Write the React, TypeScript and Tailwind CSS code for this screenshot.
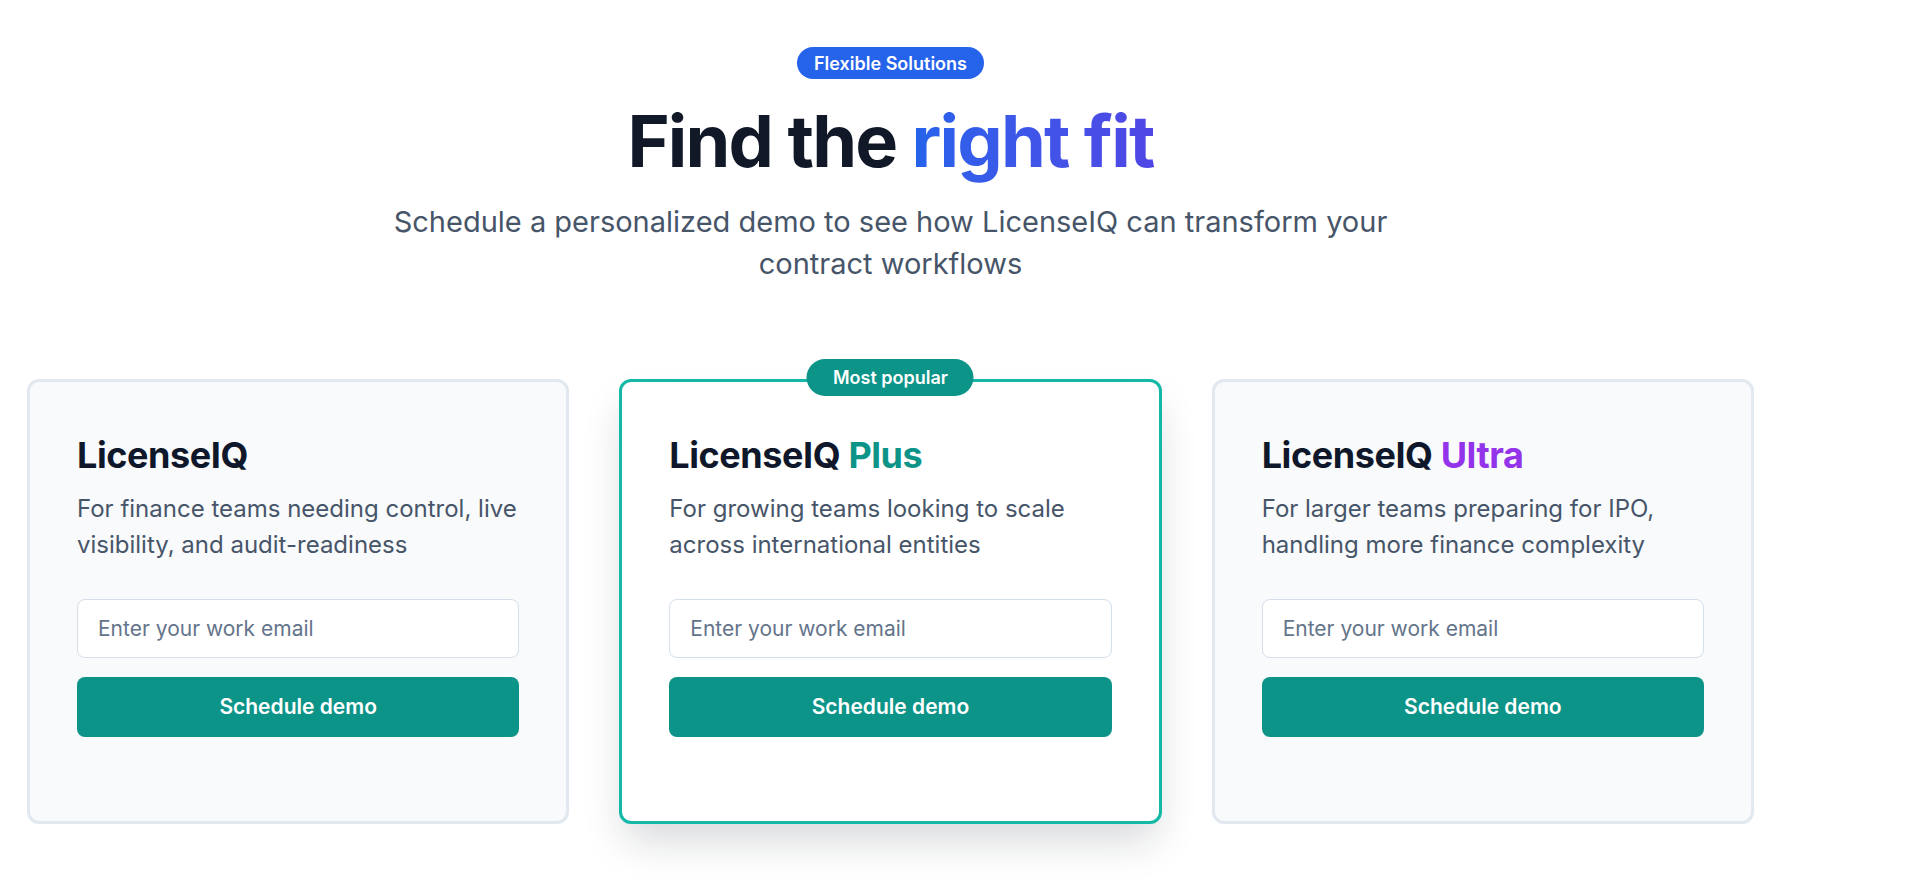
import React from "react";

type Plan = {
  name: string;
  accent?: string;
  accentClass?: string;
  description: string[];
  popular?: boolean;
};

const plans: Plan[] = [
  {
    name: "LicenseIQ",
    description: ["For finance teams needing control, live", "visibility, and audit-readiness"],
  },
  {
    name: "LicenseIQ",
    accent: "Plus",
    accentClass: "text-[#0d9488]",
    description: ["For growing teams looking to scale", "across international entities"],
    popular: true,
  },
  {
    name: "LicenseIQ",
    accent: "Ultra",
    accentClass: "text-[#9333ea]",
    description: ["For larger teams preparing for IPO,", "handling more finance complexity"],
  },
];

const PlanCard: React.FC<{ plan: Plan }> = ({ plan }) => {
  return (
    <div
      className={
        plan.popular
          ? "relative h-[445px] rounded-xl border-[3px] border-[#14b8a6] bg-white px-[47px] pt-[53px] shadow-[0_22px_40px_-6px_rgba(15,23,42,0.17)]"
          : "relative h-[445px] rounded-xl border-[3px] border-[#e2e8f0] bg-[#f8fafc] px-[47px] pt-[53px]"
      }
    >
      {plan.popular && (
        <div className="absolute left-1/2 top-[-23px] flex h-[37px] -translate-x-1/2 items-center rounded-full bg-[#0d9488] px-[26px] text-[18px] font-semibold text-white">
          Most popular
        </div>
      )}
      <h3 className="text-[36px] font-bold leading-[40px] tracking-[-0.012em] text-[#0f172a]">
        {plan.name}
        {plan.accent && <span className={plan.accentClass}> {plan.accent}</span>}
      </h3>
      <p className="mt-4 text-[24px] leading-[36px] text-[#475569]">
        {plan.description[0]}
        <br />
        {plan.description[1]}
      </p>
      <input
        type="email"
        placeholder="Enter your work email"
        className="mt-9 block h-[59px] w-full rounded-lg border border-[#d5dfeb] bg-white px-5 text-[21px] text-[#0f172a] outline-none placeholder:text-[#64748b]"
      />
      <button className="mt-[19px] flex h-[60px] w-full items-center justify-center rounded-lg bg-[#0d9488] text-[21px] font-semibold text-white">
        Schedule demo
      </button>
    </div>
  );
};

export default function App() {
  return (
    <div
      className="min-h-screen bg-white pl-[27px] pr-[161px] pt-[47px]"
      style={{ fontFamily: "Inter, 'Noto Sans', sans-serif" }}
    >
      <div className="flex flex-col items-center text-center">
        <span className="flex h-[32px] items-center rounded-full bg-[#2563eb] px-[17px] text-[18px] font-semibold text-white">
          Flexible Solutions
        </span>
        <h1 className="mt-[26px] text-[72px] font-bold leading-[72px] tracking-tight text-[#111827]">
          Find the{" "}
          <span className="bg-gradient-to-r from-[#2563eb] to-[#4f46e5] bg-clip-text text-transparent">
            right fit
          </span>
        </h1>
        <p className="mt-6 max-w-[1060px] text-[29px] leading-[42px] text-[#475569]">
          Schedule a personalized demo to see how LicenseIQ can transform your contract workflows
        </p>
      </div>
      <div className="mt-[94px] grid grid-cols-3 gap-[50px]">
        {plans.map((plan, i) => (
          <PlanCard key={i} plan={plan} />
        ))}
      </div>
    </div>
  );
}
